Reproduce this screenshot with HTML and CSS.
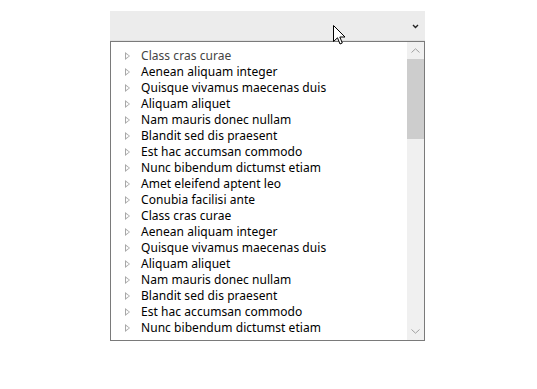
FILE: index.html
```html
<!DOCTYPE html>
<html>
<head>
<meta charset="utf-8">
<link rel="stylesheet" href="styles.css">
</head>
<body>
<div class="combo">
  <div class="combo-head">
    <svg class="chev" width="7" height="5" viewBox="0 0 7 5"><path d="M1 1 L3.5 3.5 L6 1" fill="none" stroke="#222" stroke-width="1.4"/></svg>
  </div>
  <div class="listbox">
    <ul class="items">
      <li class="item first"><span class="tri"></span>Class cras curae</li>
      <li class="item"><span class="tri"></span>Aenean aliquam integer</li>
      <li class="item"><span class="tri"></span>Quisque vivamus maecenas duis</li>
      <li class="item"><span class="tri"></span>Aliquam aliquet</li>
      <li class="item"><span class="tri"></span>Nam mauris donec nullam</li>
      <li class="item"><span class="tri"></span>Blandit sed dis praesent</li>
      <li class="item"><span class="tri"></span>Est hac accumsan commodo</li>
      <li class="item"><span class="tri"></span>Nunc bibendum dictumst etiam</li>
      <li class="item"><span class="tri"></span>Amet eleifend aptent leo</li>
      <li class="item"><span class="tri"></span>Conubia facilisi ante</li>
      <li class="item"><span class="tri"></span>Class cras curae</li>
      <li class="item"><span class="tri"></span>Aenean aliquam integer</li>
      <li class="item"><span class="tri"></span>Quisque vivamus maecenas duis</li>
      <li class="item"><span class="tri"></span>Aliquam aliquet</li>
      <li class="item"><span class="tri"></span>Nam mauris donec nullam</li>
      <li class="item"><span class="tri"></span>Blandit sed dis praesent</li>
      <li class="item"><span class="tri"></span>Est hac accumsan commodo</li>
      <li class="item"><span class="tri"></span>Nunc bibendum dictumst etiam</li>
    </ul>
    <div class="scrollbar">
      <div class="sb-btn"><svg width="9" height="5" viewBox="0 0 9 5"><path d="M0.5 4.5 L4.5 0.8 L8.5 4.5" fill="none" stroke="#a0a0a0" stroke-width="1"/></svg></div>
      <div class="sb-track"><div class="sb-thumb"></div></div>
      <div class="sb-btn"><svg width="9" height="5" viewBox="0 0 9 5"><path d="M0.5 0.5 L4.5 4.2 L8.5 0.5" fill="none" stroke="#a0a0a0" stroke-width="1"/></svg></div>
    </div>
  </div>
  <svg class="cursor" width="13" height="21" viewBox="0 0 13 21"><path d="M0.5 0.5 L0.5 16.5 L4.5 12.8 L7 19 L9.3 18 L6.8 12 L12 12 Z" fill="#fff" stroke="#000" stroke-width="1"/></svg>
</div>
</body>
</html>
```
FILE: styles.css
```css
html, body {
  margin: 0;
  padding: 0;
  background: #fff;
}
body {
  width: 537px;
  height: 389px;
  font-family: "Noto Sans", "Open Sans", sans-serif;
}
.combo {
  position: relative;
  margin: 11px 0 0 110px;
  width: 315px;
}
.combo-head {
  height: 29px;
  background: #ececec;
  border-bottom: 1px solid #e0e0e0;
  display: flex;
  justify-content: flex-end;
  align-items: center;
  padding-right: 6px;
}
.chev {
  display: block;
  margin-top: 1px;
}
.listbox {
  width: 313px;
  height: 298px;
  border: 1px solid #7a7a7a;
  display: flex;
  background: #fff;
}
.items {
  list-style: none;
  margin: 0;
  padding: 6px 0 0 0;
  flex: 1;
  overflow: hidden;
}
.item {
  height: 16px;
  line-height: 16px;
  font-size: 12px;
  letter-spacing: 0.05px;
  color: #000;
  display: flex;
  align-items: center;
  white-space: nowrap;
}
.item.first {
  color: #444;
}
.tri {
  width: 0;
  height: 0;
  margin: 0 11px 0 14px;
  position: relative;
  border-left: 5px solid #a8a8a8;
  border-top: 4px solid transparent;
  border-bottom: 4px solid transparent;
}
.tri::after {
  content: "";
  position: absolute;
  left: -4px;
  top: -2.5px;
  border-left: 3px solid #fff;
  border-top: 2.5px solid transparent;
  border-bottom: 2.5px solid transparent;
}
.scrollbar {
  width: 17px;
  background: #f0f0f0;
  display: flex;
  flex-direction: column;
}
.sb-btn {
  height: 17px;
  display: flex;
  align-items: center;
  justify-content: center;
}
.sb-track {
  flex: 1;
}
.sb-thumb {
  height: 80px;
  background: #cdcdcd;
}
.cursor {
  position: absolute;
  left: 223px;
  top: 14px;
}
```
